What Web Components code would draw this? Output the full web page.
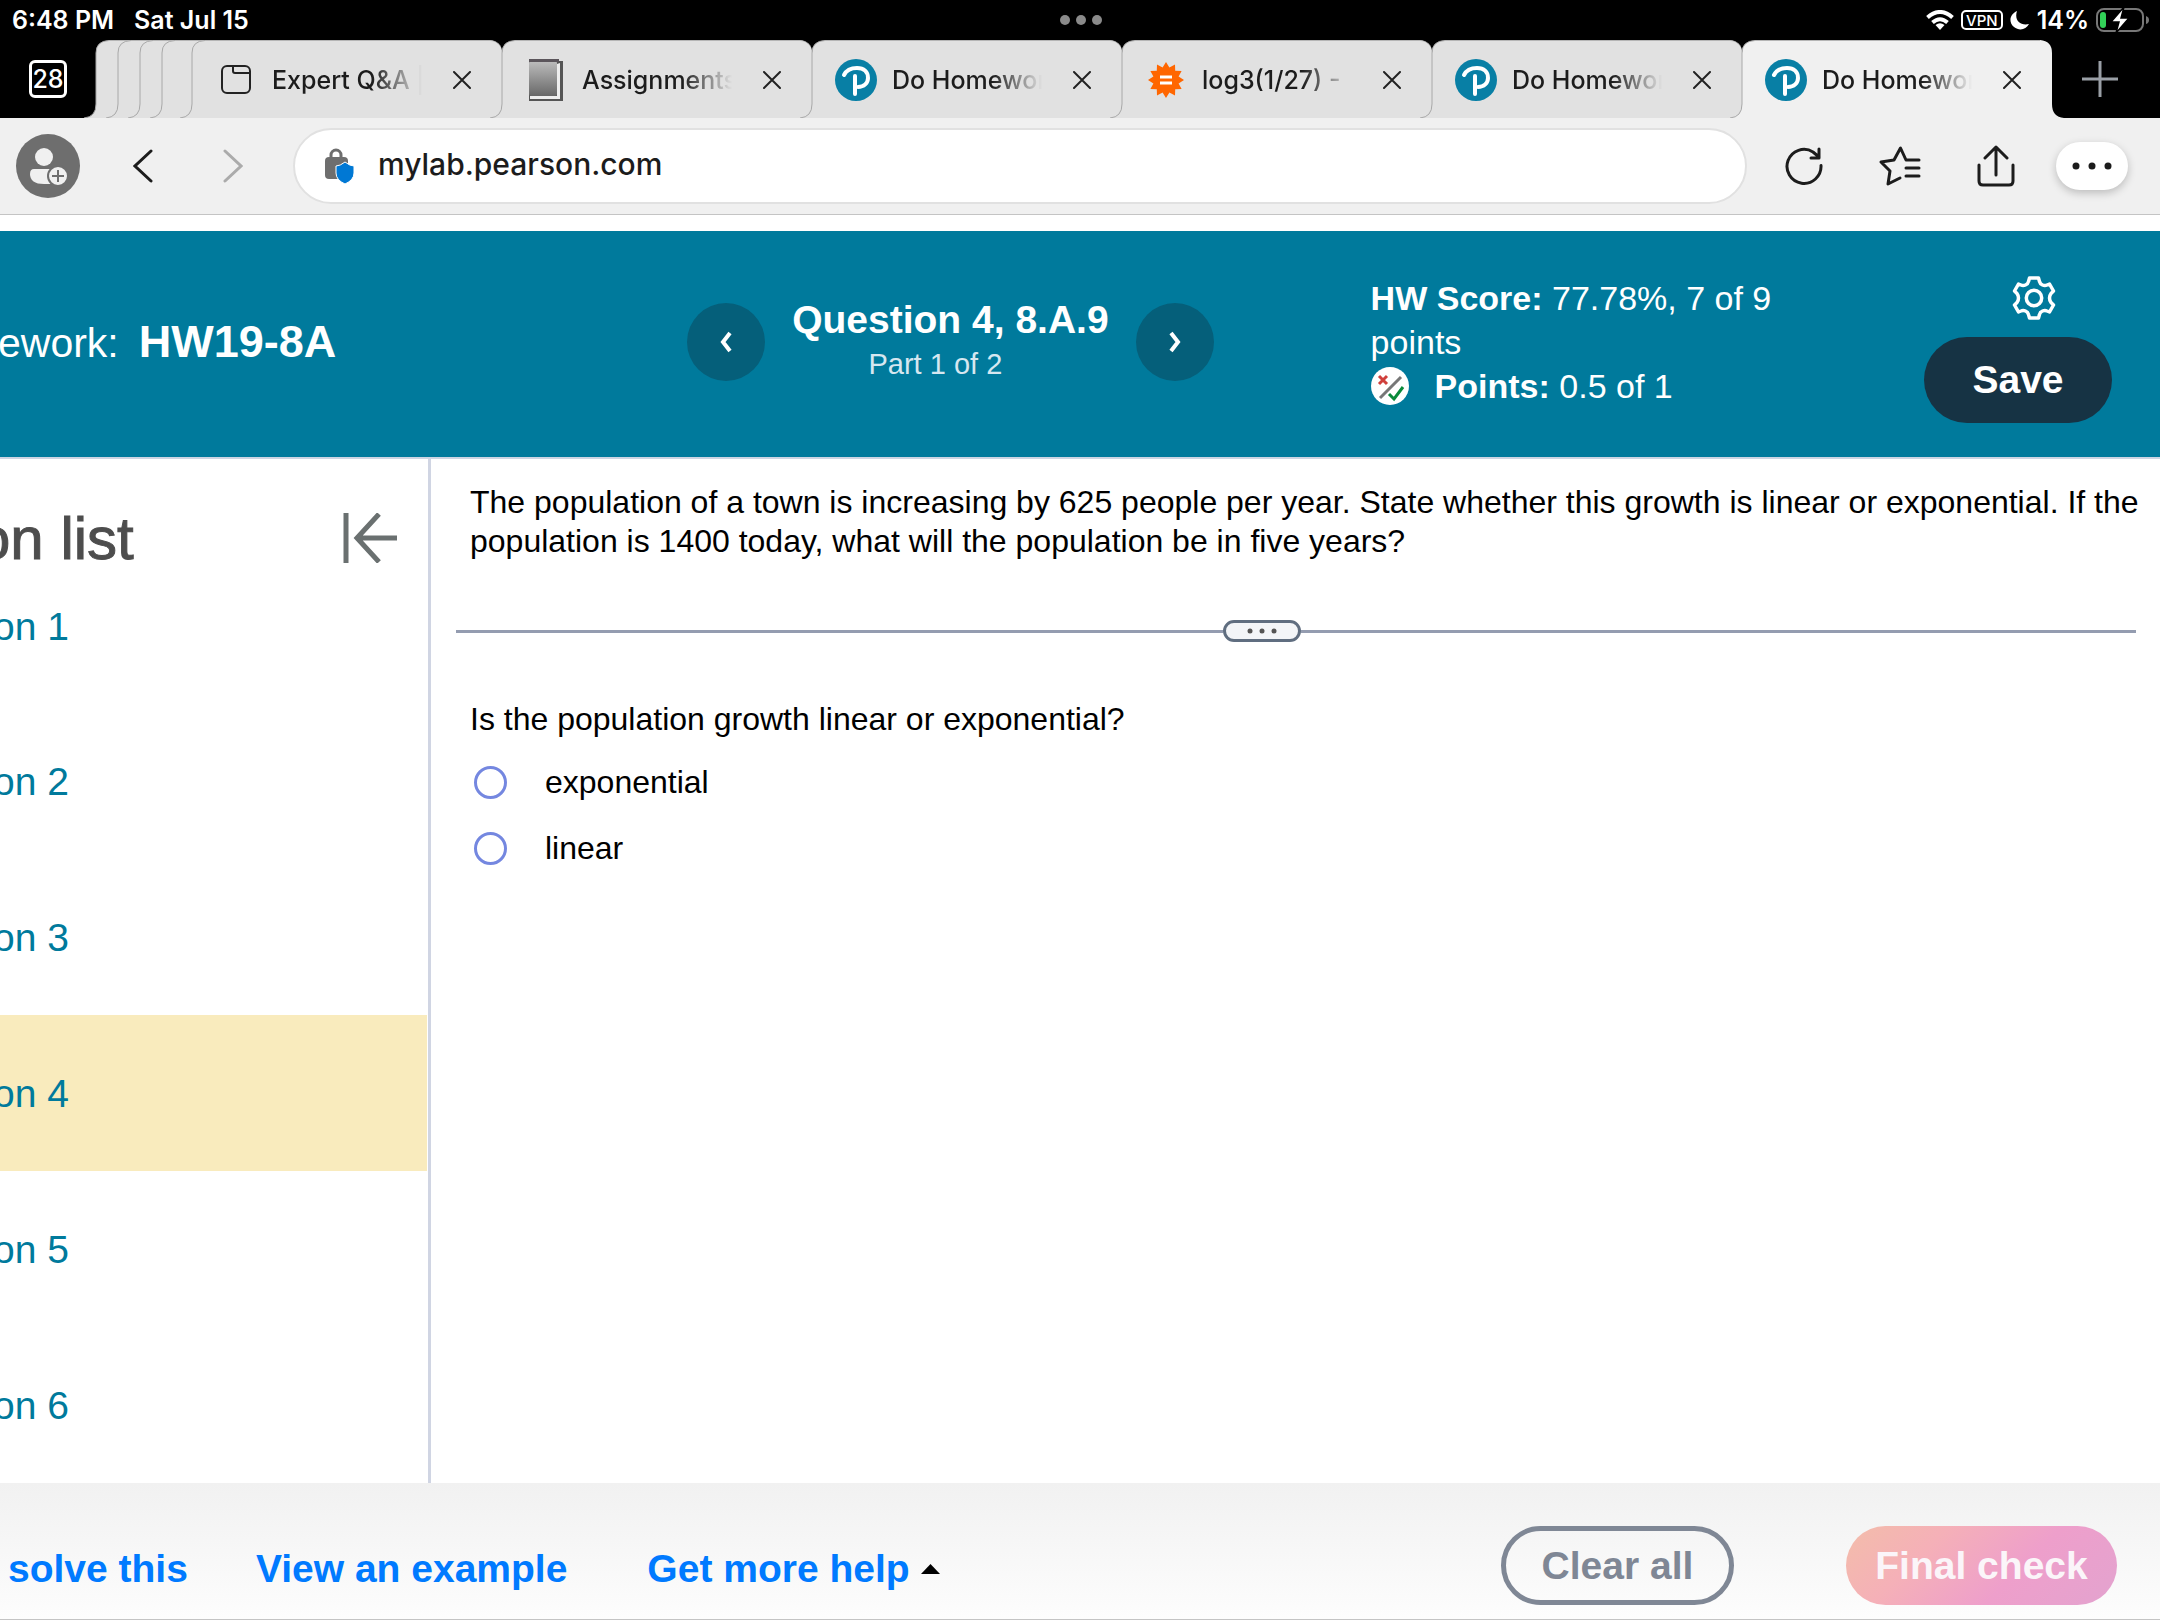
<!DOCTYPE html>
<html lang="en">
<head>
<meta charset="utf-8">
<title>Do Homework</title>
<style>
html,body{margin:0;background:#fff}
body{font-family:"Liberation Sans",Arial,sans-serif;color:#000}
</style>
</head>
<body>
<app-page></app-page>
<script>
const RESET = `
*{box-sizing:border-box}
button{font:inherit;color:inherit;background:none;border:0;padding:0;margin:0;display:flex;align-items:center;justify-content:center;cursor:pointer}
svg{display:block;flex:none}
a{text-decoration:none;color:inherit}`;
const UI = `font-family:Inter,"Liberation Sans",sans-serif;`;

function define(name, css, html) {
  customElements.define(name, class extends HTMLElement {
    constructor() {
      super();
      this.attachShadow({ mode: 'open' }).innerHTML =
        `<style>${RESET}${css}</style>` + (typeof html === 'function' ? html(this) : html);
    }
  });
}

/* Tab icons */
const burst = Array.from({ length: 24 }, (_, i) => {
  const r = i % 2 ? 13 : 18, a = Math.PI * i / 12;
  return `${(21 + r * Math.sin(a)).toFixed(1)},${(21 - r * Math.cos(a)).toFixed(1)}`;
}).join(' ');
const ICONS = {
  page: `<svg width="42" height="42" viewBox="0 0 42 42" fill="none" stroke="#222" stroke-width="2"><rect x="7" y="7" width="28" height="27" rx="5"/><path d="M18 7v5q0 2 2 2h15"/></svg>`,
  book: `<svg width="42" height="42" viewBox="0 0 42 42"><defs><linearGradient id="g" x2="0" y2="1"><stop stop-color="#bdbdbd"/><stop offset="1" stop-color="#686868"/></linearGradient></defs><path d="M4 0h30v2h4v40H4z" fill="#555"/><path d="M5 37h27V5l3-1v36H5z" fill="#eee"/><rect x="4" y="2" width="28" height="35" rx="2" fill="url(#g)"/><path d="M4 0h30v3H4z" fill="#5b555b"/></svg>`,
  pearson: `<svg width="42" height="42" viewBox="0 0 42 42" fill="none" stroke="#fff" stroke-linecap="round"><circle cx="21" cy="21" r="21" fill="#087fa5" stroke="none"/><path d="M9 16C12 10 17 9 22 9c7 0 11 4 11 10 0 5-4 9-10 9" stroke-width="4"/><path d="M20 17v18" stroke-width="4"/></svg>`,
  wolfram: `<svg width="42" height="42" viewBox="0 0 42 42"><polygon points="${burst}" fill="#f60"/><path d="M15 18h12M15 24h12" stroke="#fff" stroke-width="3"/></svg>`
};

define('status-bar', `
:host{display:grid;grid-template-columns:1fr auto 1fr;align-items:center;height:40px;padding:0 10px 0 12px;background:#000;color:#fff;${UI}font-size:25px;font-weight:600;line-height:40px}
.l{display:flex;gap:20px}.r{display:flex;justify-content:flex-end;align-items:center;gap:7px}
.vpn{border:2px solid #fff;border-radius:5px;height:20px;line-height:17px;font-size:15px;font-weight:500;padding:0 3px}`,
`<div class="l"><span>6:48 PM</span><span>Sat Jul 15</span></div>
<svg width="42" height="10" fill="#8a8a8a"><circle cx="5" cy="5" r="5"/><circle cx="21" cy="5" r="5"/><circle cx="37" cy="5" r="5"/></svg>
<div class="r">
<svg width="28" height="20" viewBox="0 0 28 20" fill="none" stroke="#fff" stroke-width="4"><path d="M1.5 7.500Q14-3.500 26.500 7.500M6.500 12.500q7.500-6.500 15 0"/><path d="M9.500 15q4.500-3.500 9 0L14 20z" fill="#fff" stroke="none"/></svg>
<span class="vpn">VPN</span>
<svg width="20" height="20" viewBox="0 0 20 20"><path d="M7 1C4 10 10 16 19 14 16 20 9 21 4 17-2 12 0 4 7 1z" fill="#fff"/></svg>
<span>14%</span>
<svg width="54" height="26" viewBox="0 0 54 26"><rect x="1" y="2" width="46" height="22" rx="7" fill="none" stroke="#777" stroke-width="2"/><path d="M50 9q3 1 3 4t-3 4z" fill="#777"/><rect x="4" y="5" width="6" height="16" rx="3" fill="#32d158"/><path d="M28 0 15 15h8l-3 11 13-15h-8z" fill="#fff" stroke="#000" stroke-width="1.500"/></svg>
</div>`);

define('browser-tab', `
:host{display:block;position:relative;height:78px;flex:0 1 310px;min-width:0;--bg:#e1e1e1}
:host([stacked]){flex:0 0 22px}:host([stacked=wide]){flex:0 0 30px}
:host([active]){--bg:#f0f0f0}
.edge{position:absolute;left:-12px;top:0}.end{position:absolute;right:-12px;top:0;display:none}
:host([active]) .end{display:block}
.body{display:flex;align-items:center;height:78px;margin-left:12px;padding-left:11px;background:var(--bg);border-top:1px solid #b5b5b5;border-top-right-radius:12px;${UI}font-size:25px;font-weight:500;color:#1c1c1c}
:host([stacked]) .body{border-radius:0;padding:0;margin-right:-12px}
:host([active]) .body{margin-right:12px;border-radius:0}
.t{width:150px;margin-left:15px;overflow:hidden;white-space:nowrap;-webkit-mask-image:linear-gradient(90deg,#000 100px,transparent 150px);mask-image:linear-gradient(90deg,#000 100px,transparent 150px)}
button{width:40px;height:40px;margin-left:20px;flex:none}`,
el => `<svg class="edge" width="25" height="78"><path d="M0 78q12-1 12-14V13Q12 1 25 .5V78z" fill="var(--bg)"/><path d="M0 78q12-1 12-14V13Q12 1 25 .5" fill="none" stroke="#a8a8a8"/></svg>
<svg class="end" width="24" height="78"><path d="M24 78Q12 77 12 64V13Q12 1 0 0V78z" fill="var(--bg)"/></svg>
<div class="body">${el.hasAttribute('stacked') ? '' : `${ICONS[el.getAttribute('icon')]}<span class="t"><slot></slot></span>
<button aria-label="Close tab"><svg width="18" height="18" stroke="#222" stroke-width="2" stroke-linecap="round"><path d="M1 1l16 16M17 1 1 17"/></svg></button>`}</div>`);

define('tab-strip', `
:host{display:flex;height:78px;background:#000;overflow:hidden}
.count{width:96px;flex:none}
.count span{width:38px;height:38px;border:3px solid #fff;border-radius:6px;color:#fff;${UI}font-size:25px;font-weight:500;line-height:32px;display:flex;justify-content:center}
.new{flex:1;min-width:60px;padding-right:12px}`,
`<button class="count" aria-label="All tabs"><span>28</span></button>
<browser-tab stacked></browser-tab><browser-tab stacked></browser-tab><browser-tab stacked></browser-tab><browser-tab stacked="wide"></browser-tab>
<browser-tab icon="page">Expert Q&amp;A |</browser-tab>
<browser-tab icon="book">Assignments</browser-tab>
<browser-tab icon="pearson">Do Homewor</browser-tab>
<browser-tab icon="wolfram">log3(1/27) - </browser-tab>
<browser-tab icon="pearson">Do Homewor</browser-tab>
<browser-tab icon="pearson" active>Do Homewor</browser-tab>
<button class="new" aria-label="New tab"><svg width="36" height="36" stroke="#9a9fa6" stroke-width="3"><path d="M18 0v36M0 18h36"/></svg></button>`);

define('browser-toolbar', `
:host{display:flex;align-items:center;height:97px;padding:0 32px 0 16px;background:#f0f0f0;border-bottom:1px solid #c4c4c4}
button{width:64px;height:64px}
.nav{display:flex;gap:26px;margin:0 28px 0 31px}
.addr{flex:1;min-width:0;height:76px;display:flex;align-items:center;gap:23px;padding-left:29px;background:#fff;border:2px solid #e1e1e1;border-radius:38px}
input{flex:1;min-width:0;border:0;outline:0;padding:0 0 4px;background:none;${UI}font-size:30px;font-weight:500;color:#1c1c1c}
.acts{display:flex;align-items:center;gap:32px;margin-left:25px}
.more{width:72px;height:48px;margin-left:-4px;background:#fff;border-radius:24px;box-shadow:0 3px 8px rgba(0,0,0,.22)}`,
`<button aria-label="Sign in"><svg width="64" height="64"><circle cx="32" cy="32" r="32" fill="#6e6e6e"/><circle cx="28" cy="23" r="9" fill="#f0f0f0"/><path d="M18 35h20v15H28q-14 0-14-10 0-5 4-5z" fill="#f0f0f0"/><circle cx="42" cy="42" r="10" fill="#f0f0f0" stroke="#6e6e6e" stroke-width="2"/><path d="M42 36v12M36 42h12" stroke="#6e6e6e" stroke-width="2"/></svg></button>
<div class="nav"><button aria-label="Back"><svg width="20" height="34" fill="none" stroke="#1c1c1c" stroke-width="3" stroke-linecap="round"><path d="M18 2 2 17l16 15"/></svg></button>
<button aria-label="Forward"><svg width="20" height="34" fill="none" stroke="#ababab" stroke-width="3" stroke-linecap="round"><path d="m2 2 16 15L2 32"/></svg></button></div>
<label class="addr"><svg width="31" height="36" viewBox="0 0 31 36"><path d="M7 10V7a5 5 0 0 1 10 0v3" fill="none" stroke="#6e6e6e" stroke-width="3"/><rect x="1" y="9" width="23" height="22" rx="4" fill="#6e6e6e"/><path d="M21 14q5 4 9 4v7q0 7-9 11-9-4-9-11v-7q4 0 9-4z" fill="#0078d4" stroke="#fff" stroke-width="1"/></svg>
<input type="text" aria-label="Address" value="mylab.pearson.com"></label>
<div class="acts">
<button aria-label="Reload"><svg width="38" height="40" fill="none" stroke="#1c1c1c" stroke-width="3" stroke-linecap="round" stroke-linejoin="round"><path d="M36 19.500A17 17 0 1 1 28 6l6 5M34 3v9h-8"/></svg></button>
<button aria-label="Favorites"><svg width="42" height="40" viewBox="0 0 42 40" fill="none" stroke="#1c1c1c" stroke-width="3" stroke-linecap="round" stroke-linejoin="round"><path d="M40 14H27L21.500 2 15 14 2 16l9 9-2 13 12-6M27 22h13M27 30h13"/></svg></button>
<button aria-label="Share"><svg width="38" height="42" fill="none" stroke="#1c1c1c" stroke-width="3" stroke-linecap="round" stroke-linejoin="round"><path d="M2 20v16q0 4 4 4h26q4 0 4-4V20M19 30V2M8 13 19 2l11 11"/></svg></button>
<button class="more" aria-label="More"><svg width="40" height="8" fill="#1c1c1c"><circle cx="4" cy="4" r="3.500"/><circle cx="20" cy="4" r="3.500"/><circle cx="36" cy="4" r="3.500"/></svg></button>
</div>`);

define('homework-header', `
:host{display:grid;grid-template-columns:minmax(0,1fr) auto minmax(0,44%);align-items:center;height:228px;margin-top:16px;background:#007a9c;color:#fff;border-bottom:2px solid #ccd5e3;padding-bottom:4px;overflow:hidden}
h1{margin:0;display:flex;align-items:baseline;gap:22px;font-size:45px;line-height:52px;font-weight:700;white-space:nowrap;text-indent:-2px}
h1 span{font-size:41px;font-weight:400}
nav{display:flex;align-items:center;gap:27px;margin-right:-4px}
nav button{width:78px;height:78px;border-radius:50%;background:#055f7a}
.q{text-align:center;font-size:39px;line-height:44px;font-weight:700}
.q small{display:block;font-size:29px;font-weight:400;line-height:44px;padding-right:30px;color:#d6e7f0}
.right{display:flex;align-items:center;justify-content:space-between;padding:0 48px 0 161px}
.score{width:410px;font-size:34px;line-height:44px}
.score div{display:flex;align-items:center;gap:26px}
.side{display:flex;flex-direction:column;align-items:center;gap:16px;padding-top:14px}
.gear{margin-left:32px}
.save{width:188px;height:86px;border-radius:43px;background:#163344;font-size:39px;font-weight:700}`,
`<h1><span>ework:</span>HW19-8A</h1>
<nav><button aria-label="Previous question"><svg width="16" height="22" fill="none" stroke="#fff" stroke-width="4"><path d="M12 2 5 11l7 9"/></svg></button>
<div class="q">Question 4, 8.A.9<small>Part 1 of 2</small></div>
<button aria-label="Next question"><svg width="16" height="22" fill="none" stroke="#fff" stroke-width="4"><path d="m4 2 7 9-7 9"/></svg></button></nav>
<div class="right"><div class="score"><b>HW Score:</b> 77.78%, 7 of 9 <span>points</span>
<div><svg width="38" height="38" fill="none"><circle cx="19" cy="19" r="19" fill="#fff"/><path d="M30 10 9 31" stroke="#777" stroke-width="3"/><path d="m8 9 8 8M16 9l-8 8" stroke="#d0403c" stroke-width="3"/><path d="m18 27 5 5 9-12" stroke="#0a8a3a" stroke-width="3"/></svg><span><b>Points:</b> 0.5 of 1</span></div></div>
<div class="side"><button class="gear" aria-label="Settings"><svg width="44" height="46" viewBox="0 0 44 46" fill="none" stroke="#fff" stroke-width="3.500" stroke-linejoin="round"><circle cx="22" cy="23" r="7.700"/><path d="M17.500 3h9l1 3.500q.6 2.500 3 3.500t4.500 0l2.500-1 4 7-2.500 2.500q-1.500 2-1.500 4.500t1.500 4.500L41.500 30l-4 7-2.500-1q-2-1-4.500 0t-3 3.500l-1 3.500h-9l-1-3.500q-.6-2.500-3-3.500t-4.500 0l-2.500 1-4-7L5 27.500Q6.500 25.500 6.500 23T5 18.500L2.500 16l4-7L9 10q2 1 4.500 0t3-3.500z"/></svg></button>
<button class="save">Save</button></div></div>`);

define('question-list', `
:host{display:block;border-right:3px solid #d0d5e3;overflow:hidden}
header{display:flex;align-items:center;justify-content:space-between;height:150px;padding:8px 31px 0 0}
h2{margin:0 0 0 -23px;font-size:60px;font-weight:400;color:#4d4d4d;-webkit-text-stroke:1px #4d4d4d}
ul{list-style:none;margin:0;padding:0;font-size:39px;line-height:52px;color:#007a9c}
li{margin-right:1px;display:flex;align-items:center;height:156px;padding-top:2px;text-indent:-7px}
li:first-child{height:94px;padding-bottom:60px}
li.on{background:#f9ebbd}`,
`<header><h2>on list</h2><button aria-label="Collapse list"><svg width="54" height="50" fill="none" stroke="#6a7070" stroke-width="5"><path d="M3 0v50M36 1 14 25l22 24M13 25h41"/></svg></button></header>
<ul>${[1, 2, 3, 4, 5, 6].map(n => `<li${n === 4 ? ' class="on"' : ''}><a href="#q${n}">on ${n}</a></li>`).join('')}</ul>`);

define('question-panel', `
:host{display:block;padding:24px 24px 0 25px;font-size:32px;line-height:39px;min-width:0}
p{margin:0 -12px 0 14px}
.bar{display:flex;align-items:center;margin:59px 0 58px}
.bar:before,.bar:after{content:"";flex:1;height:3px;background:#949cb0}
.bar:before{flex:767}.bar:after{flex:836}
.bar button{width:78px;height:22px;border:3px solid #606e80;border-radius:11px;background:#f3f5f8}
fieldset{border:0;margin:0;padding:0;min-width:0}legend{padding:0;margin:0 0 0 14px}
.o{display:flex;align-items:center;height:66px;margin-left:18px;gap:38px}
.list{padding-top:10px}
input{appearance:none;width:33px;height:33px;margin:0;border:3px solid #7487e0;border-radius:50%;background:#fff}`,
`<p>The population of a town is increasing by 625 people per year. State whether this growth is linear or exponential. If the population is 1400 today, what will the population be in five years?</p>
<div class="bar"><button aria-label="Resize panels"><svg width="32" height="6" fill="#555"><circle cx="4" cy="3" r="2.500"/><circle cx="16" cy="3" r="2.500"/><circle cx="28" cy="3" r="2.500"/></svg></button></div>
<fieldset><legend>Is the population growth linear or exponential?</legend>
<div class="list"><div class="o"><input type="radio" name="g" id="a"><label for="a">exponential</label></div>
<div class="o"><input type="radio" name="g" id="b"><label for="b">linear</label></div></div></fieldset>`);

define('action-footer', `
:host{display:flex;justify-content:space-between;height:137px;padding:43px 43px 0 8px;background:linear-gradient(#f1f1f1,#fdfdfd);border-bottom:1px solid #c4c4c4;font-size:39px;font-weight:700}
.l{display:flex;align-items:center;height:86px;gap:68px;color:#007aff}
.m{display:flex;gap:11px;align-items:center;margin-left:12px}
.r{display:flex;gap:112px}
.r button{height:79px;border-radius:40px}
.clear{width:233px;border:5px solid #7f8795;color:#7f8795}
.final{width:271px;color:#fbf5f9;background:linear-gradient(135deg,#f3bdaa,#f5b0b8 30%,#ee9fcb 62%,#e3a3cf)}`,
`<div class="l"><a href="#solve">solve this</a><a href="#example">View an example</a><button class="m">Get more help<svg width="19" height="10"><path d="M0 10 9.500 0 19 10z"/></svg></button></div>
<div class="r"><button class="clear">Clear all</button><button class="final">Final check</button></div>`);

define('app-page', `
:host{display:flex;flex-direction:column;min-height:100vh;overflow:hidden}
main{flex:1;display:grid;grid-template-columns:431px minmax(0,1fr)}`,
`<status-bar></status-bar><tab-strip></tab-strip><browser-toolbar></browser-toolbar><homework-header></homework-header>
<main><question-list></question-list><question-panel></question-panel></main><action-footer></action-footer>`);
</script>
</body>
</html>
